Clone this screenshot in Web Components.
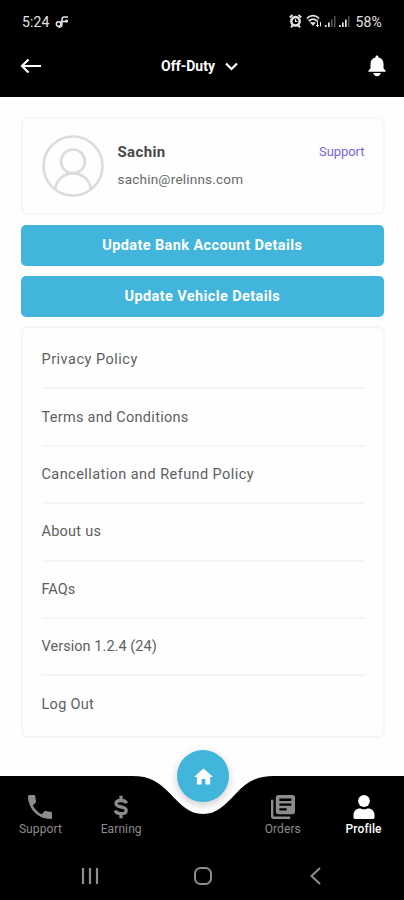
<!DOCTYPE html>
<html lang="en">
<head>
<meta charset="utf-8">
<meta name="viewport" content="width=device-width, initial-scale=1">
<title>Profile</title>
<style>
    body {
        margin: 0;
        background: #fefefe;
        font-family: Roboto, "Noto Sans", sans-serif;
    }
</style>
</head>
<body>
<profile-screen></profile-screen>

<script>
const MENU_ITEMS = [
    { label: "Privacy Policy", spacing: 0.5 },
    { label: "Terms and Conditions", spacing: 0.28 },
    { label: "Cancellation and Refund Policy", spacing: 0.43 },
    { label: "About us", spacing: 0.25 },
    { label: "FAQs", spacing: 0 },
    { label: "Version 1.2.4 (24)", spacing: 0.05 },
    { label: "Log Out", spacing: 0.3 },
];

const NAV_ICONS = {
    phone: `<path d="M6.62 10.79c1.44 2.83 3.76 5.14 6.59 6.59l2.2-2.2c.27-.27.67-.36 1.02-.24 1.12.37 2.33.57 3.57.57.55 0 1 .45 1 1V20c0 .55-.45 1-1 1C10.61 21 3 13.39 3 4c0-.55.45-1 1-1h3.5c.55 0 1 .45 1 1 0 1.25.2 2.45.57 3.57.11.35.03.74-.25 1.02z"/>`,
    dollar: `<path d="M17.4 8.200C16.900 6.400 15 5.500 12 5.500c-3 0-5 1.100-5 3.100 0 4.700 10.200 1.800 10.200 6.800 0 2-2 3.200-5.200 3.200-3.200 0-5.200-1.100-5.600-3.200M12 .8v4.800M12 18.500v4.700" fill="none" stroke="currentColor" stroke-width="3.300"/>`,
    orders: `<path d="M4 6H2v14c0 1.1.9 2 2 2h14v-2H4zm16-4H8c-1.1 0-2 .9-2 2v12c0 1.1.9 2 2 2h12c1.1 0 2-.9 2-2V4c0-1.1-.9-2-2-2zm-1 9H9V9h10zm-4 4H9v-2h6zm4-8H9V5h10z"/>`,
    person: `<circle cx="12" cy="6" r="5.900"/><path d="M1.500 22.500v-2.700c0-3.600 2.800-6.300 6.400-6.300 1.300 0 2.200.8 4.100.8s2.800-.8 4.100-.8c3.600 0 6.400 2.700 6.400 6.300v2.700c0 .9-.5 1.400-1.300 1.400H2.800c-.8 0-1.300-.5-1.300-1.400z"/>`,
};

function define(name, html, setup) {
    const template = document.createElement("template");
    template.innerHTML = html;
    customElements.define(name, class extends HTMLElement {
        constructor() {
            super();
            this.attachShadow({ mode: "open" });
            this.shadowRoot.appendChild(template.content.cloneNode(true));
        }

        connectedCallback() {
            if (setup) setup(this, this.shadowRoot);
        }
    });
}

define("status-bar", `
<style>
    :host {
        display: flex;
        align-items: center;
        height: 43px;
        box-sizing: border-box;
        padding: 0 22px;
        color: #e4e4e4;
        font-size: 14px;
    }
    .time { letter-spacing: 0.15px; }
    .note { margin-left: 5px; }
    .signals { margin-left: auto; margin-right: 4px; margin-top: -1px; }
    .battery { letter-spacing: 0.2px; }
</style>
<span class="time">5:24</span>
<svg class="note" width="14" height="14" viewBox="0 0 14 14" fill="none" stroke="currentColor" stroke-width="1.5">
    <circle cx="3.600" cy="9" r="2.300"/>
    <path d="M3.500 12.400c2.600 0 3.500-1.400 3.500-3.600V4.200c0-1.500.8-2.200 2.300-2.200H13M5.500 6.500H12" />
    <circle cx="11.500" cy="6" r=".8"/>
</svg>
<svg class="signals" width="62" height="14" viewBox="0 0 62 14">
    <g fill="none" stroke="currentColor">
        <circle cx="6.500" cy="7.300" r="4.200" stroke-width="2.500"/>
        <path d="M.8 3.500 3.500 1M12.200 3.500 9.500 1M2 13.300l1.800-2.100M11 13.300l-1.800-2.100" stroke-width="2"/>
        <path d="M6.500 5v2.500h2" stroke-width="1.200"/>
        <path d="M18 4.200c3.800-3.300 8.200-3.300 12 0M20 6.800c2.500-2.200 5.500-2.200 8 0" stroke-width="1.700"/>
        <path d="m18 4.200 6 7M30 4.200l-3 3.500" stroke-width="1" opacity=".7"/>
        <path d="m21.800 8.800 2.200 2.500 2.200-2.500z" fill="currentColor"/>
        <path d="M28.500 7v5.500M27 11l1.500 1.700L30 11M31.500 12.500V8" stroke-width="1"/>
    </g>
    <g fill="currentColor">
        <path d="M36 11h1.700v2H36zM39 8.500h1.700V13H39z"/>
        <path d="M42 5.500h1.600V13H42zM45 2h1.500v11H45z" opacity=".35"/>
        <path d="M50 11h1.700v2H50zM53 8.500h1.700V13H53zM56 5.500h1.700V13H56z"/>
        <path d="M59 2h1.500v11H59z" opacity=".35"/>
    </g>
</svg>
<span class="battery">58%</span>
`);

define("app-header", `
<style>
    :host {
        display: grid;
        grid-template-columns: 24px 1fr 24px;
        align-items: center;
        height: 53px;
        padding: 0 18px 0 20px;
        box-sizing: border-box;
        color: #fff;
    }
    svg { display: block; }
    .duty {
        display: flex;
        align-items: center;
        justify-content: center;
        gap: 10px;
        padding-right: 7px;
        font-size: 14px;
        font-weight: 700;
        line-height: 20px;
        height: 26px;
        margin-top: -7px;
    }
    .back, .bell { margin-top: -7px; }
    .bell { justify-self: end; }
</style>
<svg class="back" width="22" height="16" viewBox="0 0 22 16" fill="none" stroke="currentColor" stroke-width="2.200">
    <path d="M21 8H2.500M8.500 1.500 2 8l6.500 6.500"/>
</svg>
<div class="duty">
    <slot></slot>
    <svg width="13" height="9" viewBox="0 0 13 9" fill="none" stroke="currentColor" stroke-width="2.200">
        <path d="m1 1.500 5.500 5.500L12 1.500"/>
    </svg>
</div>
<svg class="bell" width="18" height="22" viewBox="0 0 18 22" fill="currentColor">
    <path d="M9 .5c.9 0 1.500.6 1.500 1.500v.4c3.300.7 5 3.200 5 6.300v4.500l2.100 2.600v.9H.4v-.9l2.100-2.600V8.700c0-3.100 1.700-5.600 5-6.300V2C7.500 1.100 8.100.5 9 .5z"/>
    <path d="M5.300 18h7.400c-.3 2-1.700 3.200-3.700 3.200S5.600 20 5.300 18z"/>
</svg>
`);

define("user-card", `
<style>
    :host {
        display: flex;
        height: 98px;
        box-sizing: border-box;
        padding: 0 18px 0 20px;
        border: 2px solid #f6f6f6;
        border-radius: 7px;
    }
    .avatar {
        flex: none;
        align-self: center;
        margin-left: -1px;
        margin-right: 14px;
    }
    .who {
        flex: 1;
        padding-top: 23px;
    }
    .name {
        font-size: 15px;
        font-weight: 700;
        line-height: 20px;
        color: #484848;
        letter-spacing: 0.35px;
    }
    .mail {
        margin-top: 7px;
        font-size: 13.5px;
        line-height: 20px;
        color: #686868;
        letter-spacing: 0.22px;
    }
    .link {
        padding-top: 23px;
        font-size: 13px;
        line-height: 20px;
        color: #7768dc;
        letter-spacing: -0.05px;
    }
</style>
<svg class="avatar" width="62" height="62" viewBox="0 0 61 61" fill="none" stroke="#dcdcdc" stroke-width="2.600">
    <circle cx="30.500" cy="30.500" r="29"/>
    <circle cx="30.500" cy="26" r="11.700"/>
    <path d="M13 53c1.500-9.500 8.500-15.300 17.500-15.300S46.500 43.500 48 53"/>
</svg>
<div class="who">
    <div class="name"><slot name="name"></slot></div>
    <div class="mail"><slot name="mail"></slot></div>
</div>
<div class="link"><slot name="link"></slot></div>
`);

define("action-button", `
<style>
    :host {
        display: flex;
        align-items: center;
        justify-content: center;
        height: 41px;
        box-sizing: border-box;
        border-radius: 5px;
        margin-right: 0.5px;
        background: #41b5dc;
        color: #fff;
        font-size: 14.5px;
        font-weight: 700;
        letter-spacing: 0.4px;
    }
</style>
<slot></slot>
`);

define("menu-list", `
<style>
    :host {
        display: block;
        height: 412px;
        box-sizing: border-box;
        margin-top: -1px;
        padding: 4.5px 18px 0 19px;
        border: 2px solid #f6f6f6;
        border-radius: 7px;
    }
    .row {
        height: 57.4px;
        box-sizing: border-box;
        display: flex;
        align-items: center;
        border-bottom: 2px solid #f5f5f5;
        font-size: 14.5px;
        color: #5e5e5e;
    }
    .row:last-child { border-bottom-color: transparent; }
</style>
`, (el, root) => {
    for (const item of MENU_ITEMS) {
        const row = document.createElement("div");
        row.className = "row";
        row.textContent = item.label;
        row.style.letterSpacing = `${item.spacing}px`;
        root.appendChild(row);
    }
});

define("nav-tab", `
<style>
    :host {
        display: flex;
        flex-direction: column;
        align-items: center;
        padding-top: 19px;
        color: #8c8c8c;
        font-size: 12px;
        line-height: 16px;
        letter-spacing: 0.1px;
    }
    :host([active]) {
        color: #fff;
        font-weight: 500;
    }
    svg {
        display: block;
        fill: currentColor;
        margin-bottom: 2px;
    }
</style>
<svg width="24" height="24" viewBox="0 0 24 24"></svg>
<slot></slot>
`, (el, root) => {
    const svg = root.querySelector("svg");
    const icon = el.getAttribute("icon");
    const box = { phone: "3 3 18 18", orders: "2 2 20 20" }[icon];
    if (box) svg.setAttribute("viewBox", box);
    svg.innerHTML = NAV_ICONS[icon];
});

define("bottom-nav", `
<style>
    :host {
        display: grid;
        grid-template-columns: repeat(5, 1fr);
        position: relative;
        height: 77px;
        background: #000;
    }
    .notch {
        position: absolute;
        top: 0;
        left: 132px;
    }
    .home {
        position: absolute;
        top: -26px;
        left: 177px;
        width: 52px;
        height: 52px;
        display: flex;
        align-items: center;
        justify-content: center;
        border-radius: 50%;
        background: #41b5dc;
        box-shadow: 0 3px 8px rgba(0, 0, 0, 0.2);
    }
    .gap { visibility: hidden; }
</style>
<svg class="notch" width="142" height="39" viewBox="0 0 142 39">
    <path d="M0 0c18 0 27 6 38 17.500S57 38 71 38s22-9 33-20.500S124 0 142 0z" fill="#fefefe"/>
</svg>
<div class="home">
    <svg width="19" height="17" viewBox="0 0 20 17" fill="#fff"><path d="M8 17v-6h4v6h5V9h3L10 0 0 9h3v8z"/></svg>
</div>
<nav-tab icon="phone">Support</nav-tab>
<nav-tab icon="dollar">Earning</nav-tab>
<div class="gap"></div>
<nav-tab icon="orders">Orders</nav-tab>
<nav-tab icon="person" active>Profile</nav-tab>
`);

define("system-nav", `
<style>
    :host {
        display: flex;
        align-items: center;
        justify-content: space-between;
        height: 47px;
        box-sizing: border-box;
        padding: 0 79px 1px 81px;
        background: #000;
    }
    svg { display: block; }
</style>
<svg width="18" height="18" viewBox="0 0 18 18" stroke="#8e8e8e" stroke-width="2.200"><path d="M2 1v16M9 1v16M16 1v16"/></svg>
<svg width="18" height="18" viewBox="0 0 18 18" fill="none" stroke="#8e8e8e" stroke-width="2"><rect x="1" y="1" width="16" height="16" rx="5.500"/></svg>
<svg width="18" height="18" viewBox="0 0 18 18" fill="none" stroke="#8e8e8e" stroke-width="2"><path d="M13 1 4.500 9l8.500 8"/></svg>
`);

define("profile-screen", `
<style>
    :host {
        display: flex;
        flex-direction: column;
        width: 404px;
        height: 900px;
        overflow: hidden;
    }
    .top {
        height: 96.500px;
        background: #000;
        flex: none;
    }
    main {
        flex: 1;
        padding: 20px 19.500px 0 20.500px;
        display: flex;
        flex-direction: column;
        gap: 10px;
    }
</style>
<div class="top">
    <status-bar></status-bar>
    <app-header>Off-Duty</app-header>
</div>
<main>
    <user-card>
        <span slot="name">Sachin</span>
        <span slot="mail">sachin@relinns.com</span>
        <span slot="link">Support</span>
    </user-card>
    <action-button>Update Bank Account Details</action-button>
    <action-button>Update Vehicle Details</action-button>
    <menu-list></menu-list>
</main>
<bottom-nav></bottom-nav>
<system-nav></system-nav>
`);
</script>
</body>
</html>
